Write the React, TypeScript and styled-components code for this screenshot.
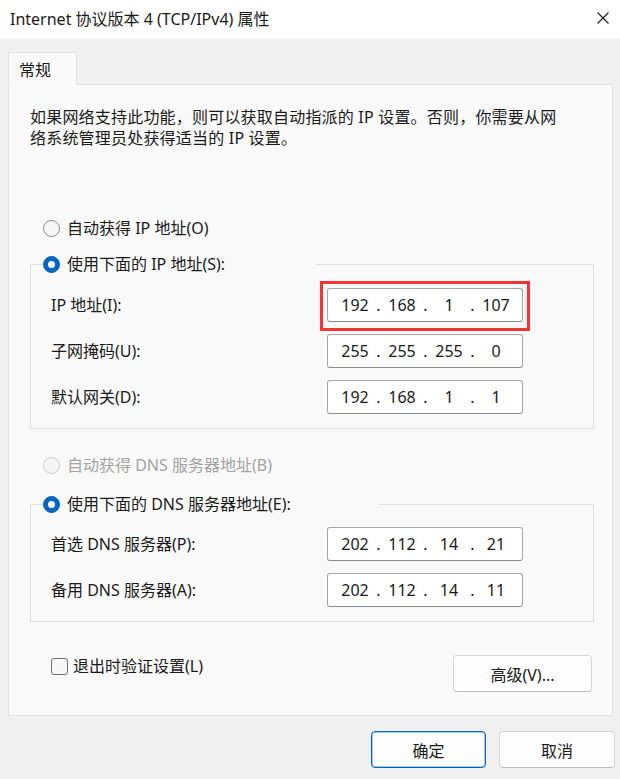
import React from "react";
import styled, { createGlobalStyle } from "styled-components";

const Global = createGlobalStyle`
  html, body { margin: 0; padding: 0; background: #f0f0f0; }
  body {
    font-family: "Noto Sans", "Noto Sans CJK SC", sans-serif;
    color: #1a1a1a;
  }
  * { box-sizing: border-box; }
`;

const Window = styled.div`
  width: 620px;
  height: 779px;
  background: #f0f0f0;
  display: flex;
  flex-direction: column;
  overflow: hidden;
`;

const TitleBar = styled.div`
  height: 39px;
  flex: none;
  background: #ffffff;
  display: flex;
  align-items: center;
  justify-content: space-between;
  padding: 0 11px 3px 10px;
  font-size: 16px;
  color: #1a1a1a;
`;

const CloseButton = styled.button`
  border: 0;
  background: transparent;
  padding: 0;
  width: 12px;
  height: 12px;
  display: flex;
`;

const Body = styled.div`
  padding: 13px 7px 0 8px;
  display: flex;
  flex-direction: column;
`;

const TabStrip = styled.div`
  display: flex;
`;

const Tab = styled.div`
  position: relative;
  z-index: 1;
  width: 69px;
  height: 33px;
  margin-bottom: -1px;
  padding: 6px 0 0 10px;
  line-height: 22px;
  font-size: 16px;
  background: #f9f9f9;
  border: 1px solid #e2e2e2;
  border-bottom: 1px solid #f9f9f9;
`;

const Panel = styled.div`
  background: #f9f9f9;
  border: 1px solid #e2e2e2;
  padding: 22px 18px 23px 21px;
  display: flex;
  flex-direction: column;
`;

const Intro = styled.p`
  margin: 0;
  font-size: 16px;
  line-height: 21px;
  letter-spacing: 0.2px;
  white-space: nowrap;
`;

const Option = styled.label<{ $top?: number; $disabled?: boolean; $inset?: number }>`
  display: flex;
  align-items: center;
  gap: 7px;
  margin-top: ${(p) => p.$top ?? 0}px;
  padding-left: ${(p) => p.$inset ?? 0}px;
  height: 22px;
  line-height: 22px;
  font-size: 16px;
  white-space: nowrap;
  color: ${(p) => (p.$disabled ? "#a3a3a3" : "#1a1a1a")};
`;

const CheckOption = styled(Option)`
  gap: 5px;
`;

const RadioDot = styled.span<{ $checked?: boolean; $disabled?: boolean }>`
  flex: none;
  width: 17px;
  height: 17px;
  border-radius: 50%;
  background: ${(p) => (p.$checked ? "#0067c0" : "#f6f6f6")};
  border: 1px solid
    ${(p) => (p.$checked ? "#0067c0" : p.$disabled ? "#c9c9c9" : "#8a8a8a")};
  display: flex;
  align-items: center;
  justify-content: center;
  &::after {
    content: "";
    display: ${(p) => (p.$checked ? "block" : "none")};
    width: 7px;
    height: 7px;
    border-radius: 50%;
    background: #ffffff;
  }
`;

const CheckBox = styled.span`
  flex: none;
  width: 17px;
  height: 17px;
  border-radius: 3px;
  border: 1px solid #6f6f6f;
  background: #f7f7f7;
`;

const Group = styled.fieldset<{ $top: number; $bottom: number }>`
  margin: ${(p) => p.$top}px 0 0 0;
  padding: 0 70px ${(p) => p.$bottom}px 12px;
  border: 1px solid #e0e0e0;
  min-width: 0;
`;

const GroupLegend = styled.legend<{ $span: number }>`
  padding: 0;
  width: ${(p) => p.$span}px;
`;

const Rows = styled.div<{ $top: number }>`
  display: flex;
  flex-direction: column;
  gap: 12px;
  padding: ${(p) => p.$top}px 0 0 8px;
`;

const Row = styled.div`
  display: flex;
  align-items: center;
  justify-content: space-between;
  height: 34px;
`;

const FieldLabel = styled.span`
  font-size: 16px;
  line-height: 22px;
  color: #1a1a1a;
  white-space: nowrap;
`;

const IpBox = styled.div<{ $highlight?: boolean }>`
  position: relative;
  width: 196px;
  height: 34px;
  background: #ffffff;
  border: 1px solid #a6a6a6;
  border-bottom-color: #8c8c8c;
  border-radius: 3px;
  display: flex;
  align-items: center;
  padding-left: 7px;
  font-size: 16px;
  color: #1a1a1a;
  &::after {
    content: "";
    display: ${(p) => (p.$highlight ? "block" : "none")};
    position: absolute;
    left: -8px;
    top: -8px;
    right: -8px;
    bottom: -10px;
    border: 3px solid #f23636;
    pointer-events: none;
  }
`;

const Octet = styled.span`
  width: 40px;
  text-align: center;
`;

const Dot = styled.span`
  width: 7px;
  text-align: center;
`;

const BottomRow = styled.div`
  margin-top: 33px;
  padding: 0 2px 0 21px;
  display: flex;
  align-items: flex-start;
  justify-content: space-between;
`;

const Button = styled.button<{ $w: number; $primary?: boolean }>`
  width: ${(p) => p.$w}px;
  height: 37px;
  border-radius: 4px;
  background: #fdfdfd;
  border: 1px solid ${(p) => (p.$primary ? "#0067c0" : "#d6d6d6")};
  border-bottom-color: ${(p) => (p.$primary ? "#0067c0" : "#bdbdbd")};
  box-shadow: ${(p) => (p.$primary ? "inset 0 0 0 1px rgba(0,103,192,0.35)" : "none")};
  font-family: "Noto Sans", "Noto Sans CJK SC", sans-serif;
  font-size: 16px;
  color: #1a1a1a;
  padding: 0;
`;

const Footer = styled.div`
  display: flex;
  justify-content: flex-end;
  gap: 13px;
  padding: 15px 5px 11px 0;
`;

const IpField: React.FC<{ value: string; highlight?: boolean }> = ({ value, highlight }) => {
  const parts = value.split(".");
  return (
    <IpBox $highlight={highlight}>
      {parts.map((p, i) => (
        <React.Fragment key={i}>
          <Octet>{p}</Octet>
          {i < parts.length - 1 && <Dot>.</Dot>}
        </React.Fragment>
      ))}
    </IpBox>
  );
};

const Radio: React.FC<{
  label: string;
  checked?: boolean;
  disabled?: boolean;
  top?: number;
  inset?: number;
}> = ({ label, checked, disabled, top, inset }) => (
  <Option $top={top} $disabled={disabled} $inset={inset}>
    <RadioDot $checked={checked} $disabled={disabled} />
    {label}
  </Option>
);

export default function App() {
  return (
    <>
      <Global />
      <Window>
        <TitleBar>
          <span>Internet 协议版本 4 (TCP/IPv4) 属性</span>
          <CloseButton aria-label="关闭">
            <svg width="12" height="12" viewBox="0 0 12 12">
              <path d="M0.5 0.5 L11.5 11.5 M11.5 0.5 L0.5 11.5" stroke="#1a1a1a" strokeWidth="1.1" fill="none" />
            </svg>
          </CloseButton>
        </TitleBar>
        <Body>
          <TabStrip>
            <Tab>常规</Tab>
          </TabStrip>
          <Panel>
            <Intro>
              如果网络支持此功能，则可以获取自动指派的 IP 设置。否则，你需要从网
              <br />
              络系统管理员处获得适当的 IP 设置。
            </Intro>

            <Radio label="自动获得 IP 地址(O)" top={68} inset={13} />

            <Group $top={14} $bottom={14}>
              <GroupLegend $span={272}>
                <Radio label="使用下面的 IP 地址(S):" checked />
              </GroupLegend>
              <Rows $top={13}>
                <Row>
                  <FieldLabel>IP 地址(I):</FieldLabel>
                  <IpField value="192.168.1.107" highlight />
                </Row>
                <Row>
                  <FieldLabel>子网掩码(U):</FieldLabel>
                  <IpField value="255.255.255.0" />
                </Row>
                <Row>
                  <FieldLabel>默认网关(D):</FieldLabel>
                  <IpField value="192.168.1.1" />
                </Row>
              </Rows>
            </Group>

            <Radio label="自动获得 DNS 服务器地址(B)" top={25} inset={13} disabled />

            <Group $top={17} $bottom={14}>
              <GroupLegend $span={335}>
                <Radio label="使用下面的 DNS 服务器地址(E):" checked />
              </GroupLegend>
              <Rows $top={12}>
                <Row>
                  <FieldLabel>首选 DNS 服务器(P):</FieldLabel>
                  <IpField value="202.112.14.21" />
                </Row>
                <Row>
                  <FieldLabel>备用 DNS 服务器(A):</FieldLabel>
                  <IpField value="202.112.14.11" />
                </Row>
              </Rows>
            </Group>

            <BottomRow>
              <CheckOption>
                <CheckBox />
                退出时验证设置(L)
              </CheckOption>
              <Button $w={139}>高级(V)...</Button>
            </BottomRow>
          </Panel>
        </Body>
        <Footer>
          <Button $w={115} $primary>
            确定
          </Button>
          <Button $w={116}>取消</Button>
        </Footer>
      </Window>
    </>
  );
}
